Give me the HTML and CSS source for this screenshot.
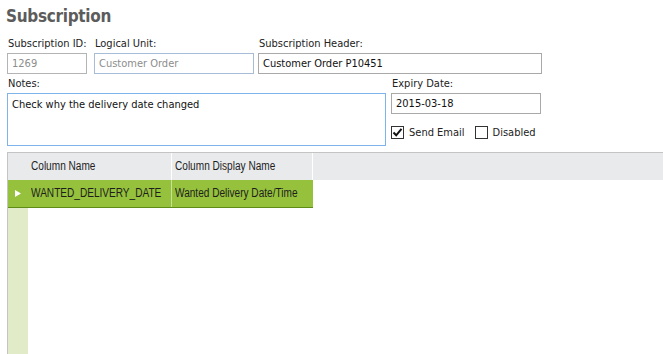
FILE: index.html
```html
<!DOCTYPE html>
<html>
<head lang="en">
    <meta charset="UTF-8">
    <title>Subscription</title>
    <link rel="stylesheet" href="styles.css">
</head>
<body>
<h1 class="title">Subscription</h1>

<div class="form-row">
    <div class="field field-id">
        <label>Subscription ID:</label>
        <input type="text" class="box box-disabled" value="1269" readonly>
    </div>
    <div class="field field-unit">
        <label>Logical Unit:</label>
        <input type="text" class="box box-disabled box-blue" value="Customer Order" readonly>
    </div>
    <div class="field field-header">
        <label>Subscription Header:</label>
        <input type="text" class="box" value="Customer Order P10451">
    </div>
</div>

<div class="form-row">
    <div class="field field-notes">
        <label>Notes:</label>
        <textarea class="box notes">Check why the delivery date changed</textarea>
    </div>
    <div class="field field-expiry">
        <label>Expiry Date:</label>
        <input type="text" class="box" value="2015-03-18">
        <div class="checks">
            <span class="check">
                <span class="check-box">
                    <svg width="11" height="11" viewBox="0 0 11 11"><path d="M1.5 5.5 L4.2 8.3 L9.5 1.8" fill="none" stroke="#111" stroke-width="2"/></svg>
                </span>
                Send Email
            </span>
            <span class="check">
                <span class="check-box"></span>
                Disabled
            </span>
        </div>
    </div>
</div>

<div class="grid">
    <div class="grid-head">
        <div class="selector"></div>
        <div class="cell col-name"><span>Column Name</span></div>
        <div class="cell col-display"><span>Column Display Name</span></div>
    </div>
    <div class="grid-row">
        <div class="selector current">
            <svg width="6" height="7" viewBox="0 0 6 7"><path d="M0 0 L6 3.5 L0 7 Z" fill="#fff"/></svg>
        </div>
        <div class="cell col-name"><span>WANTED_DELIVERY_DATE</span></div>
        <div class="cell col-display"><span>Wanted Delivery Date/Time</span></div>
    </div>
    <div class="grid-fill">
        <div class="selector"></div>
    </div>
</div>
</body>
</html>
```

FILE: styles.css
```css
html, body {
    margin: 0;
    padding: 0;
}

body {
    padding: 4px 0 0 7px;
    font-family: "DejaVu Sans Condensed", "DejaVu Sans", sans-serif;
    font-stretch: condensed;
    font-size: 11px;
    color: #222;
    background: #fff;
    overflow: hidden;
    height: 350px;
}

.title {
    margin: 0 0 9px -1px;
    height: 24px;
    font-family: "DejaVu Sans Condensed", "DejaVu Sans", sans-serif;
    font-stretch: condensed;
    font-size: 17px;
    letter-spacing: -0.3px;
    line-height: 24px;
    font-weight: bold;
    color: #5c5c5c;
}

.form-row {
    display: flex;
    align-items: flex-start;
}

.form-row + .form-row {
    margin-top: 3px;
}

.field label {
    display: block;
    height: 14px;
    line-height: 14px;
    margin-bottom: 2px;
    padding-left: 1px;
}

.field-id {
    width: 80px;
    margin-right: 7px;
}

.field-unit {
    width: 160px;
    margin-right: 4px;
}

.field-header {
    width: 284px;
}

.field-notes {
    width: 379px;
    margin-right: 5px;
}

.field-expiry {
    width: 150px;
}

.box {
    display: block;
    box-sizing: border-box;
    width: 100%;
    height: 21px;
    margin: 0;
    padding: 0 4px;
    border: 1px solid #a9a9a9;
    font-family: inherit;
    font-stretch: condensed;
    font-size: 11px;
    color: #111;
    background: #fff;
    outline: none;
}

.box-disabled {
    color: #8d8d8d;
    border-color: #b4b4b4;
}

.box-blue {
    border-color: #a6bcd8;
}

.notes {
    height: 53px;
    padding: 4px 4px;
    resize: none;
    border-color: #7eb4ea;
    line-height: 13px;
}

.checks {
    display: flex;
    margin-top: 11px;
    height: 14px;
}

.check {
    display: flex;
    align-items: center;
    line-height: 13px;
}

.check + .check {
    margin-left: 10px;
}

.check-box {
    box-sizing: border-box;
    width: 13px;
    height: 13px;
    margin-right: 5px;
    border: 1px solid #333;
    background: #fff;
    display: flex;
    align-items: center;
    justify-content: center;
}

.grid {
    margin-top: 6px;
    height: 202px;
    border-top: 1px solid #c4c4c4;
    border-left: 1px solid #c4c4c4;
    display: flex;
    flex-direction: column;
    font-family: "Liberation Sans", Arial, sans-serif;
    font-size: 12px;
    color: #1e1e1e;
}

.grid-head, .grid-row {
    display: flex;
    height: 27px;
}

.grid-head {
    background: #e9eaec;
}

.grid-row {
    width: 305px;
    background: #95c13d;
    border-bottom: 1px solid #5f8c15;
}

.grid-fill {
    flex: 1;
    display: flex;
}

.selector {
    width: 20px;
    flex: none;
    display: flex;
    align-items: center;
    padding-left: 7px;
    box-sizing: border-box;
}

.grid-fill .selector {
    background: #e1ebc7;
}

.cell {
    box-sizing: border-box;
    line-height: 27px;
    padding-left: 3px;
    white-space: nowrap;
    overflow: hidden;
}

/* narrow face is not installed, squeeze the Arial metrics instead */
.cell span {
    display: inline-block;
    transform: scaleX(0.84);
    transform-origin: left center;
}

.col-name {
    width: 144px;
    border-right: 1px solid #fff;
}

.col-display {
    width: 141px;
    border-right: 1px solid #fff;
}

.grid-row .col-name {
    border-right-color: #c8e19a;
}

.grid-row .col-display {
    border-right: none;
}
```
